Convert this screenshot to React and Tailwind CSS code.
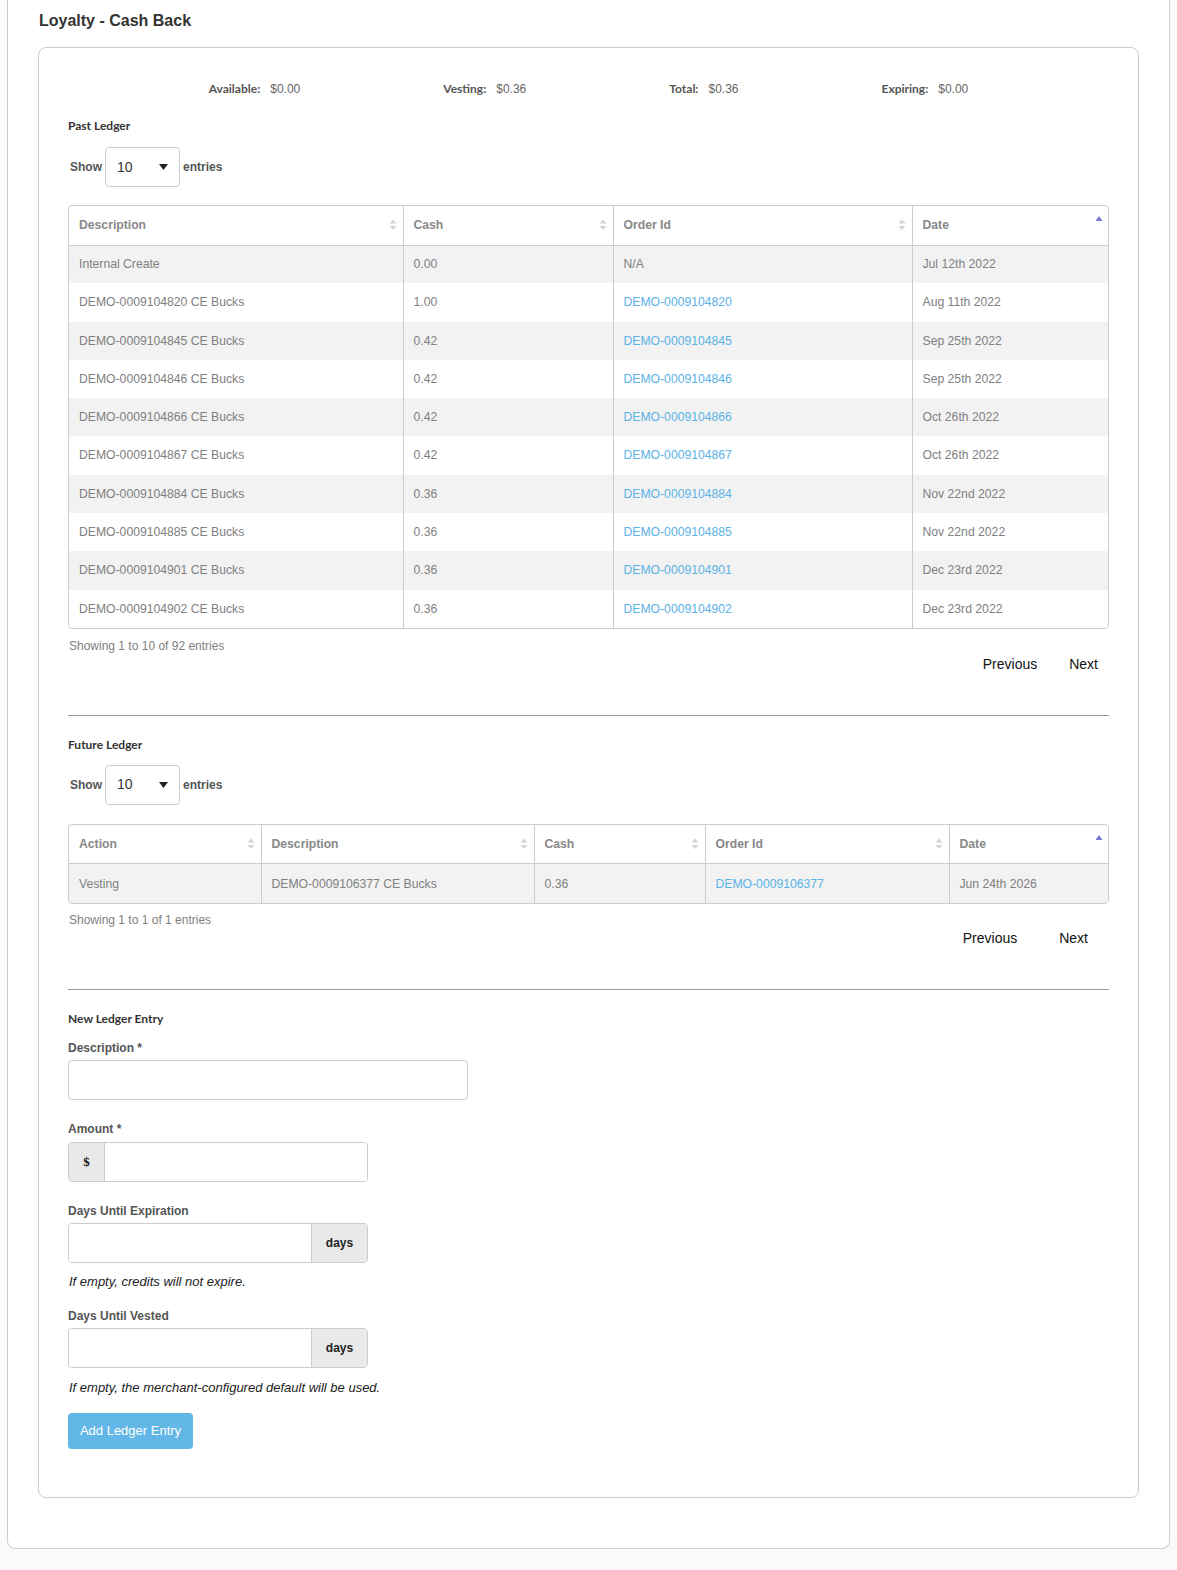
import React from "react";

const pastRows = [
  ["Internal Create", "0.00", "N/A", "Jul 12th 2022"],
  ["DEMO-0009104820 CE Bucks", "1.00", "DEMO-0009104820", "Aug 11th 2022"],
  ["DEMO-0009104845 CE Bucks", "0.42", "DEMO-0009104845", "Sep 25th 2022"],
  ["DEMO-0009104846 CE Bucks", "0.42", "DEMO-0009104846", "Sep 25th 2022"],
  ["DEMO-0009104866 CE Bucks", "0.42", "DEMO-0009104866", "Oct 26th 2022"],
  ["DEMO-0009104867 CE Bucks", "0.42", "DEMO-0009104867", "Oct 26th 2022"],
  ["DEMO-0009104884 CE Bucks", "0.36", "DEMO-0009104884", "Nov 22nd 2022"],
  ["DEMO-0009104885 CE Bucks", "0.36", "DEMO-0009104885", "Nov 22nd 2022"],
  ["DEMO-0009104901 CE Bucks", "0.36", "DEMO-0009104901", "Dec 23rd 2022"],
  ["DEMO-0009104902 CE Bucks", "0.36", "DEMO-0009104902", "Dec 23rd 2022"],
];

const arial = { fontFamily: '"Liberation Sans", Arial, sans-serif' };
const lato = { fontFamily: 'Lato, "Open Sans", sans-serif' };

function SortIcon({ active }) {
  if (active) {
    return (
      <svg width="8" height="14" viewBox="0 0 8 14" className="absolute right-[6px] top-[9px]">
        <path d="M0.5 6 L4 1 L7.5 6 Z" fill="#7777d6" />
      </svg>
    );
  }
  return (
    <svg width="8" height="14" viewBox="0 0 8 14" className="absolute right-[6px] top-[12px]">
      <path d="M0.5 5.5 L4 1.5 L7.5 5.5 Z" fill="#d4d4d4" />
      <path d="M0.5 8 L4 12 L7.5 8 Z" fill="#d4d4d4" />
    </svg>
  );
}

function ShowEntries() {
  return (
    <div className="flex items-center text-[12px] font-bold text-[#555]" style={arial}>
      <span className="ml-[2px]">Show</span>
      <div className="mx-[3px] flex h-[40px] w-[75px] items-center justify-between rounded-[4px] border border-[#ccc] bg-white pl-[11px] pr-[11px]">
        <span className="text-[14px] font-normal text-[#333]">10</span>
        <svg width="9" height="6" viewBox="0 0 9 6">
          <path d="M0 0 L9 0 L4.5 6 Z" fill="#222" />
        </svg>
      </div>
      <span>entries</span>
    </div>
  );
}

function DataTable({ cols, widths, rows, rowH, linkCol }) {
  return (
    <div className="overflow-hidden rounded-[4px] border border-[#ccc]" style={arial}>
      <table className="w-full table-fixed border-collapse text-[12.2px]">
        <colgroup>
          {widths.map((w, i) => (
            <col key={i} style={{ width: w }} />
          ))}
        </colgroup>
        <thead>
          <tr className="h-[39px] border-b border-[#ccc]">
            {cols.map((c, i) => (
              <th
                key={c}
                className={`relative px-[10px] text-left font-bold text-[#888] ${i > 0 ? "border-l border-[#ccc]" : ""}`}
              >
                {c}
                <SortIcon active={i === cols.length - 1} />
              </th>
            ))}
          </tr>
        </thead>
        <tbody>
          {rows.map((r, ri) => (
            <tr key={ri} className={`${rowH} ${ri % 2 === 0 ? "bg-[#f2f2f2]" : "bg-white"}`}>
              {r.map((v, i) => (
                <td
                  key={i}
                  className={`px-[10px] ${i > 0 ? "border-l border-[#ccc]" : ""} ${
                    i === linkCol && v !== "N/A" ? "text-[#5bb2e6]" : "text-[#808080]"
                  }`}
                >
                  {v}
                </td>
              ))}
            </tr>
          ))}
        </tbody>
      </table>
    </div>
  );
}

function SectionTitle({ children }) {
  return (
    <div className="h-4 text-[12px] font-bold leading-4 text-[#333]" style={lato}>
      {children}
    </div>
  );
}

function Label({ children }) {
  return (
    <div className="h-4 text-[12px] font-bold leading-4 text-[#555]" style={arial}>
      {children}
    </div>
  );
}

function DaysInput() {
  return (
    <div className="mt-[4px] flex h-[40px] w-[300px] overflow-hidden rounded-[4px] border border-[#ccc]">
      <div className="flex-1 bg-white" />
      <div className="flex w-[56px] items-center justify-center border-l border-[#ccc] bg-[#e9e9e9] text-[12px] font-bold text-[#222]">
        days
      </div>
    </div>
  );
}

export default function App() {
  return (
    <div className="min-h-[1570px] bg-[#fafafa] pb-[24px]" style={arial}>
      <div className="ml-[7px] w-[1163px] rounded-b-[8px] border-x border-b border-[#ccc] bg-white px-[30px] pb-[50px]">
        <h1 className="flex h-[47px] items-start pt-[11px] text-[16px] font-bold leading-5 text-[#333]" style={arial}>
          <span className="ml-px">Loyalty - Cash Back</span>
        </h1>

        <div className="rounded-[8px] border border-[#ccc] px-[29px] pb-[48px] pt-[33px]">
          {/* Summary */}
          <div className="flex h-4 items-center justify-center gap-[143px] text-[12px] leading-4">
            {[
              ["Available:", "$0.00"],
              ["Vesting:", "$0.36"],
              ["Total:", "$0.36"],
              ["Expiring:", "$0.00"],
            ].map(([k, v]) => (
              <div key={k} className="flex items-center gap-[10px]">
                <span className="font-bold text-[#555]" style={lato}>{k}</span>
                <span className="text-[#666]" style={arial}>{v}</span>
              </div>
            ))}
          </div>

          {/* Past Ledger */}
          <div className="mt-[21px]">
            <SectionTitle>Past Ledger</SectionTitle>
          </div>
          <div className="mt-[13px]">
            <ShowEntries />
          </div>
          <div className="mt-[18px]">
            <DataTable
              cols={["Description", "Cash", "Order Id", "Date"]}
              widths={[334, 210, 299, 197]}
              rows={pastRows}
              rowH="h-[38.3px]"
              linkCol={2}
            />
          </div>
          <div className="mt-[9px] h-4 pl-px text-[12px] leading-4 text-[#808080]">Showing 1 to 10 of 92 entries</div>
          <div className="mt-px flex h-5 items-center justify-end gap-[32px] pr-[11px] text-[14px] text-[#111]">
            <span>Previous</span>
            <span>Next</span>
          </div>
          <div className="mt-[40px] h-px bg-[#999]" />

          {/* Future Ledger */}
          <div className="mt-[21px]">
            <SectionTitle>Future Ledger</SectionTitle>
          </div>
          <div className="mt-[12px]">
            <ShowEntries />
          </div>
          <div className="mt-[19px]">
            <DataTable
              cols={["Action", "Description", "Cash", "Order Id", "Date"]}
              widths={[192, 273, 171, 244, 160]}
              rows={[["Vesting", "DEMO-0009106377 CE Bucks", "0.36", "DEMO-0009106377", "Jun 24th 2026"]]}
              rowH="h-[39px]"
              linkCol={3}
            />
          </div>
          <div className="mt-[8px] h-4 pl-px text-[12px] leading-4 text-[#808080]">Showing 1 to 1 of 1 entries</div>
          <div className="mt-px flex h-5 items-center justify-end gap-[42px] pr-[21px] text-[14px] text-[#111]">
            <span>Previous</span>
            <span>Next</span>
          </div>
          <div className="mt-[40px] h-px bg-[#999]" />

          {/* New Ledger Entry */}
          <div className="mt-[21px]">
            <SectionTitle>New Ledger Entry</SectionTitle>
          </div>
          <div className="mt-[13px]">
            <Label>Description *</Label>
          </div>
          <div className="mt-[4px] h-[40px] w-[400px] rounded-[4px] border border-[#ccc] bg-white" />

          <div className="mt-[21px]">
            <Label>Amount *</Label>
          </div>
          <div className="mt-[5px] flex h-[40px] w-[300px] overflow-hidden rounded-[4px] border border-[#ccc]">
            <div
              className="flex w-[36px] items-center justify-center border-r border-[#ccc] bg-[#e9e9e9] text-[13px] font-bold text-[#111]"
              style={{ fontFamily: '"Liberation Serif", "Times New Roman", serif' }}
            >
              $
            </div>
            <div className="flex-1 bg-white" />
          </div>

          <div className="mt-[21px]">
            <Label>Days Until Expiration</Label>
          </div>
          <DaysInput />
          <div className="mt-[10px] h-[18px] pl-px text-[13px] italic leading-[18px] text-[#222]">If empty, credits will not expire.</div>

          <div className="mt-[17px]">
            <Label>Days Until Vested</Label>
          </div>
          <DaysInput />
          <div className="mt-[11px] h-[18px] pl-px text-[13px] italic leading-[18px] text-[#222]">
            If empty, the merchant-configured default will be used.
          </div>

          <button className="mt-[16px] flex h-[36px] w-[125px] items-center justify-center rounded-[4px] bg-[#62b7e6] text-[13px] text-white">
            Add Ledger Entry
          </button>
        </div>
      </div>
    </div>
  );
}
